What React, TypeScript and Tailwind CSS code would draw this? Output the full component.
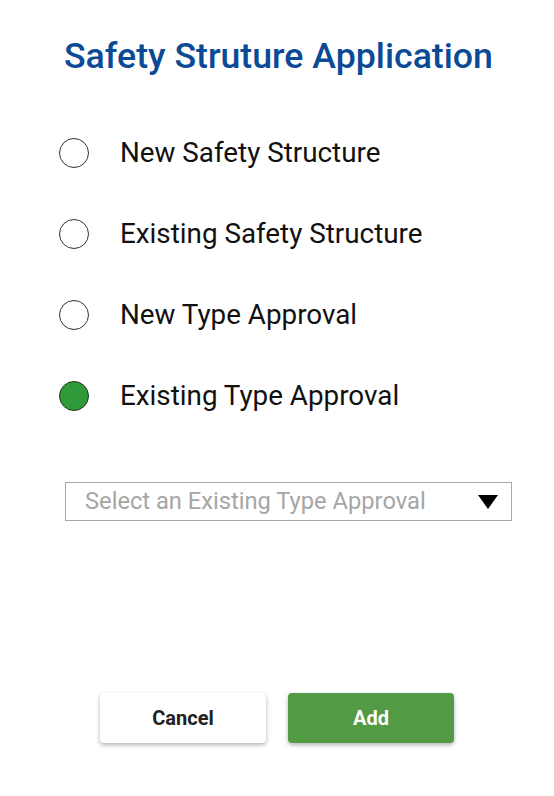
import React, { useState } from 'react';

const OPTIONS = [
  'New Safety Structure',
  'Existing Safety Structure',
  'New Type Approval',
  'Existing Type Approval',
];

export default function App() {
  const [selected, setSelected] = useState(3);

  return (
    <div className="w-[554px] h-[796px] bg-white flex flex-col" style={{ fontFamily: 'Roboto, "Noto Sans", sans-serif' }}>
      <h1 className="mt-[34px] pl-[3px] text-center text-[35.7px] leading-[44px] font-medium text-[#0b4a95]">
        Safety Struture Application
      </h1>

      <div className="mt-[59px] flex flex-col gap-[49px] pl-[59px]">
        {OPTIONS.map((label, i) => (
          <button
            key={label}
            type="button"
            onClick={() => setSelected(i)}
            className="flex items-center h-[32px] text-left"
          >
            <span
              className={
                i === selected
                  ? 'w-[30px] h-[30px] rounded-full border-[1.5px] border-[#1b3a1d] bg-[#2f9a37]'
                  : 'w-[30px] h-[30px] rounded-full border border-[#333]'
              }
            />
            <span className="ml-[31px] text-[27.8px] text-[#111]">{label}</span>
          </button>
        ))}
      </div>

      <div className="mt-[70px] ml-[65px] w-[447px] h-[39px] border border-[#a8a8a8] flex items-center pl-[19px] pr-[13px]">
        <span className="flex-1 text-[23.7px] text-[#a6a6a6]">Select an Existing Type Approval</span>
        <svg width="20" height="14" viewBox="0 0 20 14">
          <polygon points="0,0 20,0 10,14" fill="#000" />
        </svg>
      </div>

      <div className="mt-auto mb-[53px] flex justify-center gap-[22px]">
        <button
          type="button"
          className="w-[166px] h-[50px] rounded-[4px] bg-white text-[20px] font-bold text-[#222] shadow-[0_2px_4px_rgba(0,0,0,0.3)]"
        >
          Cancel
        </button>
        <button
          type="button"
          className="w-[166px] h-[50px] rounded-[4px] bg-[#539a44] text-[20px] font-bold text-white shadow-[0_2px_4px_rgba(0,0,0,0.3)]"
        >
          Add
        </button>
      </div>
    </div>
  );
}
